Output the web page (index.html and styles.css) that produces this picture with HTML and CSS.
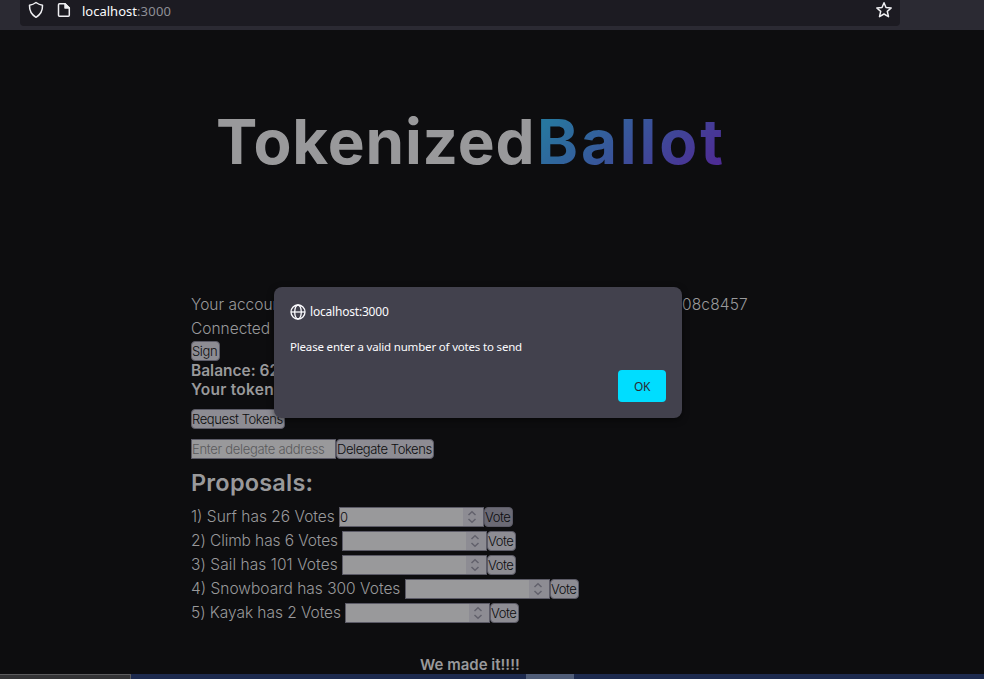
FILE: index.html
```html
<!DOCTYPE html>
<html lang="en">
<head>
<meta charset="utf-8">
<title>Tokenized Ballot</title>
<link rel="stylesheet" href="styles.css">
</head>
<body>
<header class="toolbar">
  <div class="urlbar">
    <svg class="shield" width="16" height="18" viewBox="0 0 16 18"><path d="M8 1.500C6 3 3.500 3.900 1.500 4.300C1.300 9.500 3.200 13.500 8 16.300C12.800 13.500 14.700 9.500 14.500 4.300C12.500 3.900 10 3 8 1.500Z"/></svg>
    <svg class="page-icon" width="14" height="16" viewBox="0 0 14 16"><path d="M2.500 1.700H8L12.300 6V13.300Q12.300 14.300 11.300 14.300H2.500Q1.500 14.300 1.500 13.300V2.700Q1.500 1.700 2.500 1.700Z"/><path class="fold" d="M8 1.700V6H12.300Z"/></svg>
    <span class="address">localhost<span class="port">:3000</span></span>
    <svg class="star" width="18" height="18" viewBox="0 0 18 18"><path d="M9 1.800L11 6.500L16.200 7L12.300 10.400L13.500 15.700L9 13L4.500 15.700L5.700 10.400L1.800 7L7 6.500Z"/></svg>
  </div>
</header>
<main class="page">
  <h1><span class="word">Tokenized</span><span class="gradient">Ballot</span></h1>
  <section class="content">
    <div class="line account"><span class="account-start">Your account</span><span class="account-end">08c8457</span></div>
    <div class="line connected">Connected</div>
    <button class="btn sign">Sign</button>
    <p class="strong balance">Balance: 62</p>
    <p class="strong token">Your token</p>
    <button class="btn request">Request Tokens</button>
    <div class="delegate"><div class="field">Enter delegate address</div><button class="btn delegate-btn">Delegate Tokens</button></div>
    <h2>Proposals:</h2>
    <div class="proposal"><span class="label p1">1) Surf has 26 Votes</span><div class="field number">0<span class="spin"><svg width="10" height="14" viewBox="0 0 10 14"><path d="M1.500 5L5 1.700L8.500 5M1.500 9L5 12.300L8.500 9"/></svg></span></div><button class="btn vote pressed">Vote</button></div>
    <div class="proposal"><span class="label p2">2) Climb has 6 Votes</span><div class="field number"><span class="spin"><svg width="10" height="14" viewBox="0 0 10 14"><path d="M1.500 5L5 1.700L8.500 5M1.500 9L5 12.300L8.500 9"/></svg></span></div><button class="btn vote">Vote</button></div>
    <div class="proposal"><span class="label p3">3) Sail has 101 Votes</span><div class="field number"><span class="spin"><svg width="10" height="14" viewBox="0 0 10 14"><path d="M1.500 5L5 1.700L8.500 5M1.500 9L5 12.300L8.500 9"/></svg></span></div><button class="btn vote">Vote</button></div>
    <div class="proposal"><span class="label p4">4) Snowboard has 300 Votes</span><div class="field number"><span class="spin"><svg width="10" height="14" viewBox="0 0 10 14"><path d="M1.500 5L5 1.700L8.500 5M1.500 9L5 12.300L8.500 9"/></svg></span></div><button class="btn vote">Vote</button></div>
    <div class="proposal"><span class="label p5">5) Kayak has 2 Votes</span><div class="field number"><span class="spin"><svg width="10" height="14" viewBox="0 0 10 14"><path d="M1.500 5L5 1.700L8.500 5M1.500 9L5 12.300L8.500 9"/></svg></span></div><button class="btn vote">Vote</button></div>
  </section>
  <p class="made">We made it!!!!</p>
</main>
<footer class="taskbar"><div class="task-search"></div><div class="task-active"></div></footer>
<div class="dialog" role="alertdialog">
  <div class="origin"><svg width="16" height="16" viewBox="0 0 16 16"><circle cx="8" cy="8" r="7"/><ellipse cx="8" cy="8" rx="3.300" ry="7"/><path d="M1 8H15"/></svg><span>localhost:3000</span></div>
  <p class="message">Please enter a valid number of votes to send</p>
  <button class="ok">OK</button>
</div>
</body>
</html>
```
FILE: styles.css
```css
* { box-sizing: border-box; }
body {
  margin: 0;
  width: 984px;
  height: 679px;
  overflow: hidden;
  display: flex;
  flex-direction: column;
  background: #0d0d0f;
  color: #99999b;
  font-family: Inter, sans-serif;
}
button { font-family: inherit; margin: 0; }
svg { fill: none; flex: none; }

.toolbar { height: 30px; flex: none; background: #2b2a33; padding-left: 20px; }
.urlbar {
  width: 880px;
  height: 26px;
  background: #1c1b22;
  border-radius: 0 0 4px 4px;
  display: flex;
  align-items: flex-start;
  padding: 1px 7px 0 8px;
}
.urlbar svg { stroke: #f0f0f3; stroke-width: 1.5; stroke-linejoin: round; }
.page-icon { margin: 1px 0 0 13px; }
.page-icon .fold { fill: #f0f0f3; }
.address { margin-left: 11px; font: 13px/20px "Noto Sans", sans-serif; color: #fbfbfe; }
.port { color: #8f8f96; letter-spacing: 0.2px; }
.star { margin-left: auto; }

.page { flex: 1; min-height: 0; display: flex; flex-direction: column; }
h1 {
  margin: 76px 0 0 216px;
  height: 72px;
  display: flex;
  font: 700 62px/72px Inter, sans-serif;
}
.word { width: 321px; letter-spacing: 0.850px; }
.gradient {
  width: 190px;
  letter-spacing: 2.900px;
  color: transparent;
  background: linear-gradient(135deg, #27779f 10%, #4d2c94 90%);
  background-clip: text;
  -webkit-background-clip: text;
}
.content {
  margin: 115px 0 0 191px;
  display: flex;
  flex-direction: column;
  align-items: flex-start;
}
.line { height: 24px; font-size: 15.500px; line-height: 24px; font-weight: 300; white-space: nowrap; }
.account { display: flex; }
.account-start { width: 491px; }
.account-end { letter-spacing: 0.150px; }
.btn {
  height: 20px;
  border: 1px solid #5b5a66;
  border-radius: 4px;
  background: #8d8c93;
  color: #0c0c0e;
  font-size: 13px;
  line-height: 18px;
  font-weight: 300;
  letter-spacing: -0.400px;
  padding: 0;
  text-align: left;
  white-space: nowrap;
}
.sign { width: 29px; }
.strong { margin: 0; height: 19px; font-size: 15.500px; line-height: 20px; font-weight: 600; }
.token { letter-spacing: 0.250px; }
.request { width: 94px; margin-top: 10px; }
.delegate { display: flex; margin-top: 10px; }
.delegate-btn { width: 98px; }
.field {
  width: 145px;
  height: 20px;
  border: 1px solid #5b5a66;
  background: #99999b;
  color: #59595b;
  font-size: 13px;
  line-height: 18px;
  font-weight: 300;
  letter-spacing: -0.300px;
  white-space: nowrap;
}
h2 { margin: 9px 0 7px; height: 30px; font-size: 23.500px; line-height: 30px; font-weight: 600; letter-spacing: 0.200px; }
.proposal { height: 24px; display: flex; align-items: center; }
.label { font-size: 15.500px; line-height: 24px; font-weight: 300; white-space: nowrap; }
.p1 { width: 148px; }
.p2, .p3 { width: 151px; }
.p2 { letter-spacing: -0.100px; }
.p3 { letter-spacing: 0.060px; }
.p4 { width: 214px; }
.p5 { width: 154px; letter-spacing: -0.050px; }
.number { display: flex; color: #0c0c0e; }
.spin { width: 20px; height: 18px; margin-left: auto; padding-right: 2px; display: flex; align-items: center; justify-content: center; background: #8d8c93; }
.spin svg { stroke: #62616c; stroke-width: 1.5; }
.vote { width: 29px; }
.pressed { background: #6b6a75; }
.made { margin: 30px 0 0 420px; font-size: 15px; line-height: 20px; font-weight: 600; }

.taskbar { height: 5px; flex: none; display: flex; background: #1d2a4e; }
.task-search { width: 131px; background: #333335; border: solid #5c5c5e; border-width: 1px 1px 0 0; }
.task-active { width: 48px; margin-left: 395px; background: #505d78; }

.dialog {
  position: absolute;
  left: 274px;
  top: 287px;
  width: 408px;
  height: 131px;
  border-radius: 8px;
  background: #42414d;
  box-shadow: 0 2px 6px rgba(0, 0, 0, .5);
  color: #fbfbfe;
  font: 12px/16px "Noto Sans", sans-serif;
  padding: 16px;
  display: flex;
  flex-direction: column;
}
.origin { display: flex; align-items: center; gap: 4px; height: 17px; letter-spacing: -0.200px; }
.origin svg { stroke: #fbfbfe; stroke-width: 1.300; }
.message { margin: 19px 0 0; height: 16px; font-size: 11.500px; letter-spacing: -0.180px; white-space: nowrap; }
.ok {
  width: 48px;
  height: 32px;
  margin: 15px 0 0 auto;
  border: 0;
  border-radius: 4px;
  background: #00ddff;
  color: #2b2a33;
  font-size: 12px;
  letter-spacing: -0.500px;
}
```
